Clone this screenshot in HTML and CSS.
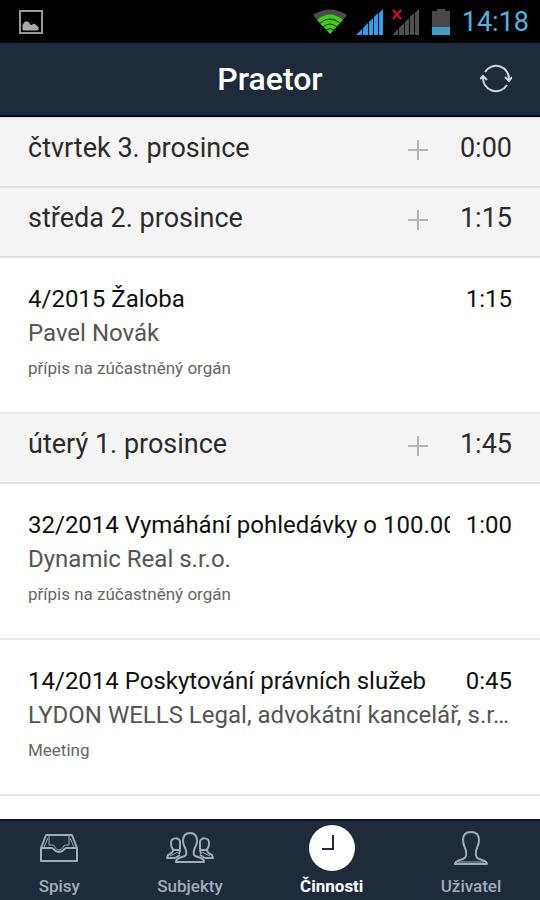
FILE: index.html
```html
<!DOCTYPE html>
<html lang="cs">
<head>
    <meta charset="UTF-8">
    <meta name="viewport" content="width=device-width, initial-scale=1.0">
    <title>Praetor</title>
    <link rel="stylesheet" href="styles.css">
</head>
<body>
    <div class="status-bar">
        <svg class="picture-icon" width="24" height="24" viewBox="0 0 24 24">
            <rect x="1" y="1" width="22" height="22" fill="none" stroke="#999" stroke-width="2"/>
            <path d="M4 20v-5l2-3 3 0 3 4 3-2 4 3v3z" fill="#aaa" stroke="#aaa" stroke-linejoin="round"/>
        </svg>
        <div class="status-icons">
            <svg width="36" height="26" viewBox="0 0 36 26">
                <path d="M1 6Q18-5 35 6L31 11Q18 2 5 11z" fill="#4a4a4a"/>
                <path d="M5 11Q18 0 31 11L18 25z" fill="#4c1"/>
                <path d="M8 14Q18 6 28 14M11 18Q18 12 25 18M14 21Q18 18 22 21" fill="none" stroke="#042a00" stroke-width="1"/>
            </svg>
            <svg width="28" height="26" viewBox="0 0 28 26">
                <path d="M0 26L6 20V26zM7 26V19L12 14V26zM13 26V13L17 9V26zM18 26V8L22 4V26zM23 26V4L27 0V26z" fill="#29a0ee"/>
            </svg>
            <svg width="28" height="26" viewBox="0 0 28 26">
                <path d="M0 26L6 20V26zM7 26V19L12 14V26zM13 26V13L17 9V26zM18 26V8L22 4V26zM23 26V4L27 0V26z" fill="#505050"/>
                <path d="M1 1L9 10M9 1L1 10" stroke="#d0101c" stroke-width="2"/>
            </svg>
            <svg class="battery-icon" width="18" height="26" viewBox="0 0 18 26">
                <path d="M0 2H5V0H13V2H18V19H0z" fill="#484848"/>
                <rect y="18" width="18" height="8" fill="#3f9cc4"/>
            </svg>
            <span class="clock">14:18</span>
        </div>
    </div>

    <header class="navbar">
        <h1>Praetor</h1>
        <button class="refresh" type="button" aria-label="Obnovit">
            <svg width="32" height="30" viewBox="0 0 32 30" fill="none" stroke="#d0d5dc" stroke-width="2">
                <path d="M5 8A13 13 0 0 1 29 16M27 21A13 13 0 0 1 3 13"/>
                <path d="M25 13L29 17L32 13M0 15L3 12L7 16"/>
            </svg>
        </button>
    </header>

    <main>
        <section class="day">
            <h2>čtvrtek 3. prosince</h2>
            <button class="add" type="button" aria-label="Přidat"></button>
            <span class="total">0:00</span>
        </section>

        <section class="day">
            <h2>středa 2. prosince</h2>
            <button class="add" type="button" aria-label="Přidat"></button>
            <span class="total">1:15</span>
        </section>
        <article class="entry">
            <div class="entry-head">
                <h3>4/2015 Žaloba</h3>
                <span>1:15</span>
            </div>
            <p class="client">Pavel Novák</p>
            <p class="note">přípis na zúčastněný orgán</p>
        </article>

        <section class="day">
            <h2>úterý 1. prosince</h2>
            <button class="add" type="button" aria-label="Přidat"></button>
            <span class="total">1:45</span>
        </section>
        <article class="entry">
            <div class="entry-head">
                <h3>32/2014 Vymáhání pohledávky o 100.000</h3>
                <span>1:00</span>
            </div>
            <p class="client">Dynamic Real s.r.o.</p>
            <p class="note">přípis na zúčastněný orgán</p>
        </article>
        <article class="entry">
            <div class="entry-head">
                <h3>14/2014 Poskytování právních služeb</h3>
                <span>0:45</span>
            </div>
            <p class="client">LYDON WELLS Legal, advokátní kancelář, s.r.o.</p>
            <p class="note">Meeting</p>
        </article>
    </main>

    <nav class="tabs">
        <a href="#spisy">
            <svg width="38" height="46" viewBox="0 0 38 46" fill="none" stroke="#a3acb8" stroke-width="2" stroke-linejoin="round">
                <path d="M1 23V36H37V23L32 10H6L1 23H12C14 23 14 27 19 27S24 23 26 23H37"/>
                <path d="M9 11V20H13C15 20 15 25 19 25S23 20 25 20H29V11M8 13L4 22M30 13L34 22" stroke-width="1"/>
            </svg>
            <span>Spisy</span>
        </a>
        <a href="#subjekty">
            <svg width="48" height="46" viewBox="0 0 48 46" fill="none" stroke="#a3acb8" stroke-width="2" stroke-linejoin="round">
                <path d="M24 8C19 8 17 11 17 16C17 20 19 22 20 25C21 30 20 31 16 32C12 33 10 34 10 37H38C38 34 36 33 32 32C28 31 27 30 28 25C29 22 31 20 31 16C31 11 29 8 24 8z"/>
                <path d="M14 24V17C14 12 5 12 5 18C5 22 6 24 8 25H14L13 29M7 25C7 28 4 29 2 30L1 33H9L14 30"/>
                <path d="M34 24V17C34 12 43 12 43 18C43 22 42 24 40 25H34L35 29M41 25C41 28 44 29 46 30L47 33H39L34 30"/>
                <path d="M4 31L12 27M44 31L36 27" stroke-width="1"/>
            </svg>
            <span>Subjekty</span>
        </a>
        <a class="active" href="#cinnosti">
            <svg width="46" height="46" viewBox="0 0 46 46">
                <circle cx="23" cy="23" r="23" fill="#fff"/>
                <path d="M24 10V24H13" fill="none" stroke="#1f2b3a" stroke-width="2"/>
            </svg>
            <span>Činnosti</span>
        </a>
        <a href="#uzivatel">
            <svg width="36" height="46" viewBox="0 0 36 46" fill="none" stroke="#a3acb8" stroke-width="2" stroke-linejoin="round">
                <path d="M18 7C12 7 10 10 10 15C10 20 12 22 13 26C14 32 12 34 7 35C4 36 2 37 2 39H34C34 37 32 36 29 35C24 34 22 32 23 26C24 22 26 20 26 15C26 10 24 7 18 7z"/>
                <path d="M5 37H31" stroke-width="1"/>
            </svg>
            <span>Uživatel</span>
        </a>
    </nav>
</body>
</html>
```

FILE: styles.css
```css
* {
    box-sizing: border-box;
}

body {
    font-family: Roboto, "Noto Sans", sans-serif;
    margin: 0;
    height: 100vh;
    display: flex;
    flex-direction: column;
    background-color: #fff;
    color: #111;
}

h1, h2, h3, p {
    margin: 0;
    font-weight: normal;
}

button {
    background: none;
    border: none;
    padding: 0;
    cursor: pointer;
}

svg {
    display: block;
    flex: none;
}

.status-bar {
    flex: none;
    display: flex;
    justify-content: space-between;
    align-items: center;
    height: 43px;
    padding: 0 11px 0 19px;
    background-color: #000;
}

.status-icons {
    display: flex;
    align-items: center;
    gap: 8px;
}

.battery-icon {
    margin: 0 4px;
}

.clock {
    color: #4db5e0;
    font-size: 27px;
    line-height: 32px;
}

.navbar {
    flex: none;
    display: grid;
    grid-template-columns: 1fr auto 1fr;
    align-items: center;
    height: 74px;
    padding: 0 28px;
    background-color: #1f2b3a;
    border-bottom: 2px solid #060b25;
}

.navbar h1 {
    grid-column: 2;
    color: #fff;
    font-size: 32px;
    font-weight: 500;
    line-height: 40px;
}

.refresh {
    justify-self: end;
}

main {
    flex: 1;
    min-height: 0;
    overflow: hidden;
    border-top: 1px solid #d8d8d8;
}

.day {
    display: flex;
    align-items: center;
    height: 70px;
    padding: 0 28px 8px;
    background-color: #f4f4f4;
    border-bottom: 2px solid #e2e2e2;
}

.day h2 {
    flex: 1;
    color: #2b2b2b;
    font-size: 27px;
    line-height: 32px;
}

.add {
    width: 20px;
    height: 20px;
    margin-top: 4px;
    background:
        linear-gradient(#b4b4b4, #b4b4b4) center / 20px 2px no-repeat,
        linear-gradient(#b4b4b4, #b4b4b4) center / 2px 20px no-repeat;
}

.total {
    width: 84px;
    color: #2b2b2b;
    font-size: 27px;
    line-height: 32px;
    text-align: right;
}

.entry {
    padding: 24px 28px 32px;
    border-bottom: 2px solid #e8e8e8;
}

.entry-head {
    display: flex;
    justify-content: space-between;
    gap: 16px;
    font-size: 24px;
    line-height: 34px;
}

.entry-head h3 {
    font-size: 24px;
    overflow: hidden;
    white-space: nowrap;
}

.client {
    overflow: hidden;
    color: #555;
    font-size: 24px;
    line-height: 34px;
    text-overflow: ellipsis;
    white-space: nowrap;
}

.note {
    padding-top: 6px;
    color: #666;
    font-size: 17px;
    line-height: 24px;
}

.tabs {
    flex: none;
    display: flex;
    justify-content: space-around;
    padding: 4px 0 2px;
    background-color: #1f2b3a;
    border-top: 2px solid #0a1226;
}

.tabs a {
    display: flex;
    flex-direction: column;
    align-items: center;
    gap: 3px;
    color: #a3acb8;
    font-size: 17px;
    font-weight: 500;
    line-height: 24px;
    text-decoration: none;
}

.tabs .active {
    color: #fff;
    font-weight: bold;
}
```
